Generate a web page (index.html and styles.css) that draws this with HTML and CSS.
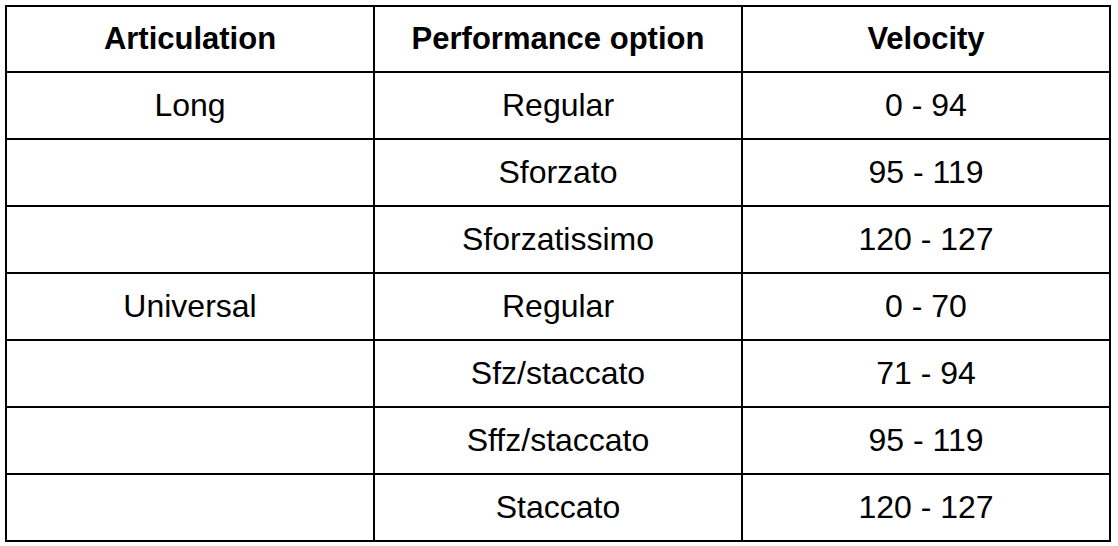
FILE: index.html
```html
<!DOCTYPE html>
<html>
<head>
<meta charset="utf-8">
<link rel="stylesheet" href="styles.css">
</head>
<body>
<div class="wrap">
<table class="grid">
  <thead>
    <tr><th>Articulation</th><th>Performance option</th><th>Velocity</th></tr>
  </thead>
  <tbody>
    <tr><td>Long</td><td>Regular</td><td>0 - 94</td></tr>
    <tr><td></td><td>Sforzato</td><td>95 - 119</td></tr>
    <tr><td></td><td>Sforzatissimo</td><td>120 - 127</td></tr>
    <tr><td>Universal</td><td>Regular</td><td>0 - 70</td></tr>
    <tr><td></td><td>Sfz/staccato</td><td>71 - 94</td></tr>
    <tr><td></td><td>Sffz/staccato</td><td>95 - 119</td></tr>
    <tr><td></td><td>Staccato</td><td>120 - 127</td></tr>
  </tbody>
</table>
</div>
</body>
</html>
```

FILE: styles.css
```css
html, body {
  margin: 0;
  padding: 0;
  background: #fff;
}
.wrap {
  padding: 5px 0 0 5px;
}
.grid {
  border-collapse: collapse;
  width: 1106px;
  table-layout: fixed;
  font-family: "Liberation Sans", Arial, sans-serif;
  font-size: 32px;
  color: #000;
}
.grid th, .grid td {
  border: 2px solid #000;
  text-align: center;
  vertical-align: middle;
  padding: 0;
  line-height: 1.1;
}
.grid th {
  height: 64px;
  font-weight: bold;
  font-size: 31px;
}
.grid td {
  height: 65px;
  font-weight: normal;
}
```
